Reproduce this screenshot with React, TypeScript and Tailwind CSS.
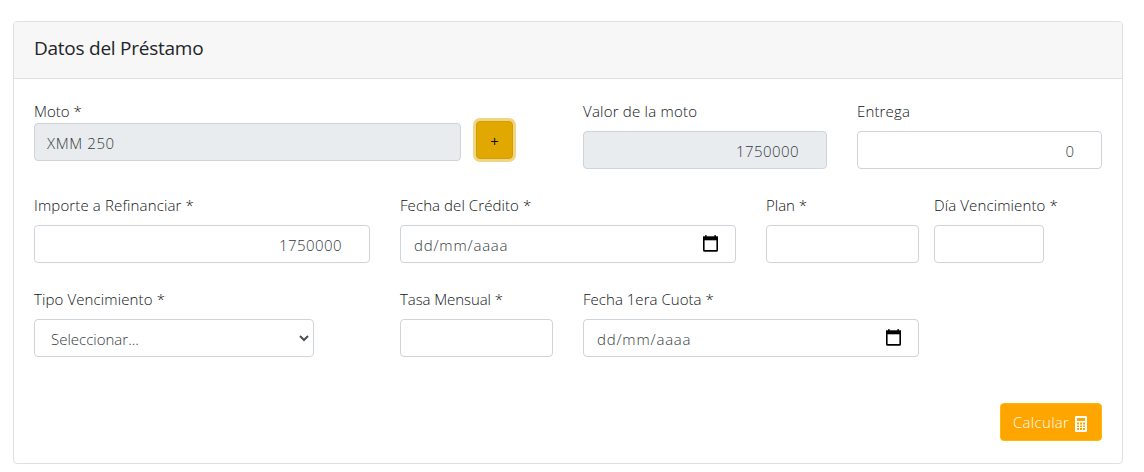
import type { ReactNode } from "react";

function CalendarIcon() {
  return (
    <svg width="16" height="18" viewBox="0 0 16 18" className="shrink-0">
      <path d="M3 0h1.7v2H3zM12.3 0h1.7v2h-1.7z" fill="#333" />
      <path d="M1 1.3h15v4H1z" fill="#000" />
      <path d="M1.8 4v11.2q0 .7.7.7h12q.7 0 .7-.7V4" fill="none" stroke="#000" strokeWidth="1.6" />
    </svg>
  );
}

function CalculatorIcon() {
  return (
    <svg width="12" height="16" viewBox="0 0 12 16" className="shrink-0">
      <rect width="12" height="16" rx="1.2" fill="#fff" />
      <path
        d="M2 2h8v3H2zM2 6.5h2v2H2zM5 6.5h2v2H5zM8 6.5h2v2H8zM2 9.5h2v1.5H2zM5 9.5h2v1.5H5zM8 9.5h2v1.5H8zM2 12h2v2H2zM5 12h2v2H5zM8 12h2v2H8z"
        fill="#ffa500"
      />
    </svg>
  );
}

function Field({ label, width, tracking = "", children }: { label: string; width: string; tracking?: string; children?: ReactNode }) {
  return (
    <div className={`shrink-0 ${width}`}>
      <div className={`mb-2 h-6 leading-6 whitespace-nowrap ${tracking}`}>{label}</div>
      {children}
    </div>
  );
}

function Box({ className = "", children }: { className?: string; children?: ReactNode }) {
  return (
    <div className={`flex h-[38px] items-center rounded-[4px] border border-[#ced4da] pt-[3px] text-[#343a40] ${className}`}>
      {children}
    </div>
  );
}

function DateBox() {
  return (
    <Box className="justify-between bg-white pr-[17px] pl-[13px]">
      <span className="tracking-[0.8px]">dd/mm/aaaa</span>
      <span className="-mt-[3px]"><CalendarIcon /></span>
    </Box>
  );
}

export default function App() {
  return (
    <div className="h-[472px] w-[1144px] bg-white pt-[21px] pl-[13px] font-['Open_Sans','Noto_Sans',sans-serif] text-[15px] font-light text-[#101316]">
      <main className="flex h-[443px] w-[1110px] flex-col rounded-[4px] border border-[#dfdfdf] bg-white">
        <header className="flex h-[57px] shrink-0 items-center rounded-t-[3px] border-b border-[#dfdfdf] bg-[#f7f7f7] px-5 pb-[3px]">
          <h1 className="text-[19px] font-normal tracking-[-0.25px] text-[#212529]">Datos del Préstamo</h1>
        </header>
        <div className="flex grow flex-col px-5 pt-[20px]">
          <div className="flex h-[94px]">
            <div className="w-[427px]">
              <div className="h-6 leading-6">Moto *</div>
              <Box className="bg-[#e9ecef] px-3 tracking-[0.6px]">XMM 250</Box>
            </div>
            <button className="mt-[22px] ml-[15px] flex h-[38px] w-[37px] shrink-0 items-center justify-center rounded-[4px] border border-[#d39e00] bg-[#e0a800] pt-[3px] text-[15px] font-normal shadow-[0_0_0_3px_#efd584]">+</button>
            <div className="ml-[70px] flex gap-[30px]">
              <Field label="Valor de la moto" width="w-[244px]" tracking="tracking-[0.22px]">
                <Box className="justify-end bg-[#e9ecef] pr-[27px] tracking-[0.45px]">1750000</Box>
              </Field>
              <Field label="Entrega" width="w-[245px]" tracking="tracking-[0.15px]">
                <Box className="justify-end pr-[27px]">0</Box>
              </Field>
            </div>
          </div>
          <div className="flex h-[94px]">
            <Field label="Importe a Refinanciar *" width="w-[336px]" tracking="tracking-[0.14px]">
              <Box className="justify-end pr-[27px] tracking-[0.45px]">1750000</Box>
            </Field>
            <div className="ml-[30px] flex gap-[30px]">
              <Field label="Fecha del Crédito *" width="w-[336px]" tracking="tracking-[0.08px]"><DateBox /></Field>
              <Field label="Plan *" width="w-[153px]"><Box /></Field>
            </div>
            <div className="ml-[15px]">
              <Field label="Día Vencimiento *" width="w-[110px]" tracking="tracking-[0.12px]"><Box /></Field>
            </div>
          </div>
          <div className="flex h-[94px]">
            <Field label="Tipo Vencimiento *" width="w-[280px]" tracking="tracking-[0.12px]">
              <Box className="justify-between pr-1 pl-4">
                <span>Seleccionar...</span>
                <svg width="10" height="7" viewBox="0 0 10 7" className="-mt-[3px]">
                  <path d="M1 1l4 4 4-4" fill="none" stroke="#495057" strokeWidth="2" />
                </svg>
              </Box>
            </Field>
            <div className="ml-[86px] flex gap-[30px]">
              <Field label="Tasa Mensual *" width="w-[153px]" tracking="tracking-[-0.08px]"><Box /></Field>
              <Field label="Fecha 1era Cuota *" width="w-[336px]" tracking="tracking-[0.03px]"><DateBox /></Field>
            </div>
          </div>
          <button className="mt-[22px] flex h-[38px] w-[102px] items-center justify-between self-end rounded-[4px] border border-[#ffb807] bg-[#ffa500] px-3 text-white">
            <span className="tracking-[0.3px]">Calcular</span>
            <span className="mr-[2px] mt-1"><CalculatorIcon /></span>
          </button>
        </div>
      </main>
    </div>
  );
}
